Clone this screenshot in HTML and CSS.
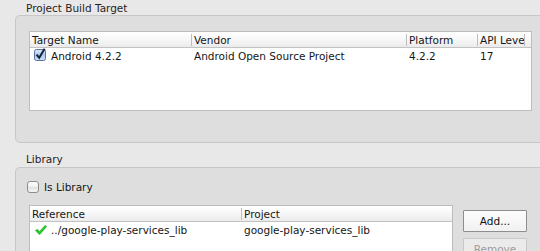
FILE: index.html
```html
<!DOCTYPE html>
<html lang="en">
<head>
  <meta charset="UTF-8">
  <title>Project Properties - Android</title>
  <link rel="stylesheet" href="styles.css">
</head>
<body>
  <div class="pane">

    <!-- Build target -->
    <div class="legend">Project Build Target</div>
    <div class="group target-group">
      <div class="table target-table">
        <div class="thead target-cols">
          <div class="th">Target Name</div>
          <div class="th">Vendor</div>
          <div class="th">Platform</div>
          <div class="th">API Level</div>
          <div class="th"></div>
        </div>
        <div class="tr target-cols">
          <div class="td">
            <svg class="check-box" width="12" height="13" viewBox="0 0 12 13">
              <defs>
                <linearGradient id="aqua" x1="0" y1="0" x2="0" y2="1">
                  <stop offset="0" stop-color="#e2eefc"/>
                  <stop offset="0.5" stop-color="#a9c8ee"/>
                  <stop offset="1" stop-color="#cfe2f8"/>
                </linearGradient>
              </defs>
              <rect x="0.5" y="1.5" width="11" height="11" rx="2" fill="url(#aqua)" stroke="#56739c"/>
              <path d="M2.6 6.6 L5.2 9.8 L10.6 0.8" fill="none" stroke="#16203a" stroke-width="2"/>
            </svg>
            Android 4.2.2
          </div>
          <div class="td">Android Open Source Project</div>
          <div class="td">4.2.2</div>
          <div class="td">17</div>
        </div>
      </div>
    </div>

    <!-- Library -->
    <div class="legend lib-legend">Library</div>
    <div class="group lib-group">
      <div class="is-lib"><span class="box"></span>Is Library</div>
      <div class="lib-row">
        <div class="table ref-table">
          <div class="thead ref-cols">
            <div class="th">Reference</div>
            <div class="th">Project</div>
          </div>
          <div class="tr ref-cols">
            <div class="td">
              <svg class="ok" width="12" height="10" viewBox="0 0 12 10">
                <path d="M0.3 5.6 L2.6 4.2 L4.4 6.6 L10.2 0.3 L11.8 1.4 L4.6 9.8 Z" fill="#25c92a" stroke="#1ea823" stroke-width="0.5"/>
              </svg>
              ../google-play-services_lib
            </div>
            <div class="td">google-play-services_lib</div>
          </div>
        </div>
        <div class="buttons">
          <div class="btn">Add...</div>
          <div class="btn disabled">Remove</div>
        </div>
      </div>
    </div>

  </div>
</body>
</html>
```

FILE: styles.css
```css
* {
  box-sizing: border-box;
}

body {
  margin: 0;
  height: 251px;
  overflow: hidden;
  background: #e8e8e8;
  font-family: "DejaVu Sans", sans-serif;
  font-size: 10.5px;
  color: #161616;
}

.pane {
  width: 540px;
}

/* group titles */
.legend {
  padding: 1px 0 0 26px;
  line-height: 14px;
  color: #2a2222;
}

.lib-legend {
  margin-top: 8px;
  padding-bottom: 1px;
}

/* group boxes */
.group {
  margin-left: 15px;
  margin-right: -12px;
  border: 1px solid #c7c7c7;
  border-radius: 5px;
  background: #dedede;
}

.target-group {
  padding: 15px 0 31px 13px;
}

.lib-group {
  padding: 13px 0 30px 13px;
}

/* tables */
.table {
  background: #fff;
  border: 1px solid #bdbdbd;
}

.target-table {
  width: 503px;
  height: 80px;
}

.ref-table {
  width: 424px;
  height: 70px;
}

.target-cols {
  display: grid;
  grid-template-columns: 161px 215px 71px 47px 7px;
}

.ref-cols {
  display: grid;
  grid-template-columns: 211px 211px;
}

.thead {
  height: 16px;
  background: linear-gradient(#ffffff, #f7f7f7 50%, #ebebeb);
  border-bottom: 1px solid #c2c2c2;
}

.th {
  margin-top: 2px;
  height: 12px;
  line-height: 13px;
  padding-left: 2px;
  border-left: 1px solid #bebebe;
  white-space: nowrap;
  overflow: hidden;
}

.th:first-child {
  border-left: none;
}

.tr {
  height: 16px;
  line-height: 16px;
}

.td {
  display: flex;
  align-items: center;
  padding-left: 3px;
  white-space: nowrap;
  overflow: hidden;
}

.td:first-child {
  padding-left: 2px;
}

.check-box {
  margin: -3px 5px 0 2px;
  flex: none;
}

.ok {
  margin: 0 4px 0 3px;
  flex: none;
}

/* "Is Library" checkbox */
.is-lib {
  display: flex;
  align-items: center;
  gap: 5px;
  margin-left: -2px;
  height: 12px;
  line-height: 12px;
}

.box {
  width: 12px;
  height: 12px;
  border: 1px solid #8d8d8d;
  border-radius: 3px;
  background: linear-gradient(#ffffff, #f1f1f1 45%, #e2e2e2 55%, #f6f6f6);
}

.lib-row {
  display: flex;
  align-items: flex-start;
  gap: 10px;
  margin-top: 12px;
}

/* buttons */
.buttons {
  display: flex;
  flex-direction: column;
  gap: 6px;
  margin-top: 5px;
}

.btn {
  width: 64px;
  height: 22px;
  line-height: 20px;
  text-align: center;
  border: 1px solid #8e8e8e;
  border-radius: 1px;
  background: linear-gradient(#fdfdfd, #f1f1f1);
  color: #111;
}

.btn.disabled {
  border-color: #c8c8c8;
  background: #ebebeb;
  color: #9b9b9b;
}
```
